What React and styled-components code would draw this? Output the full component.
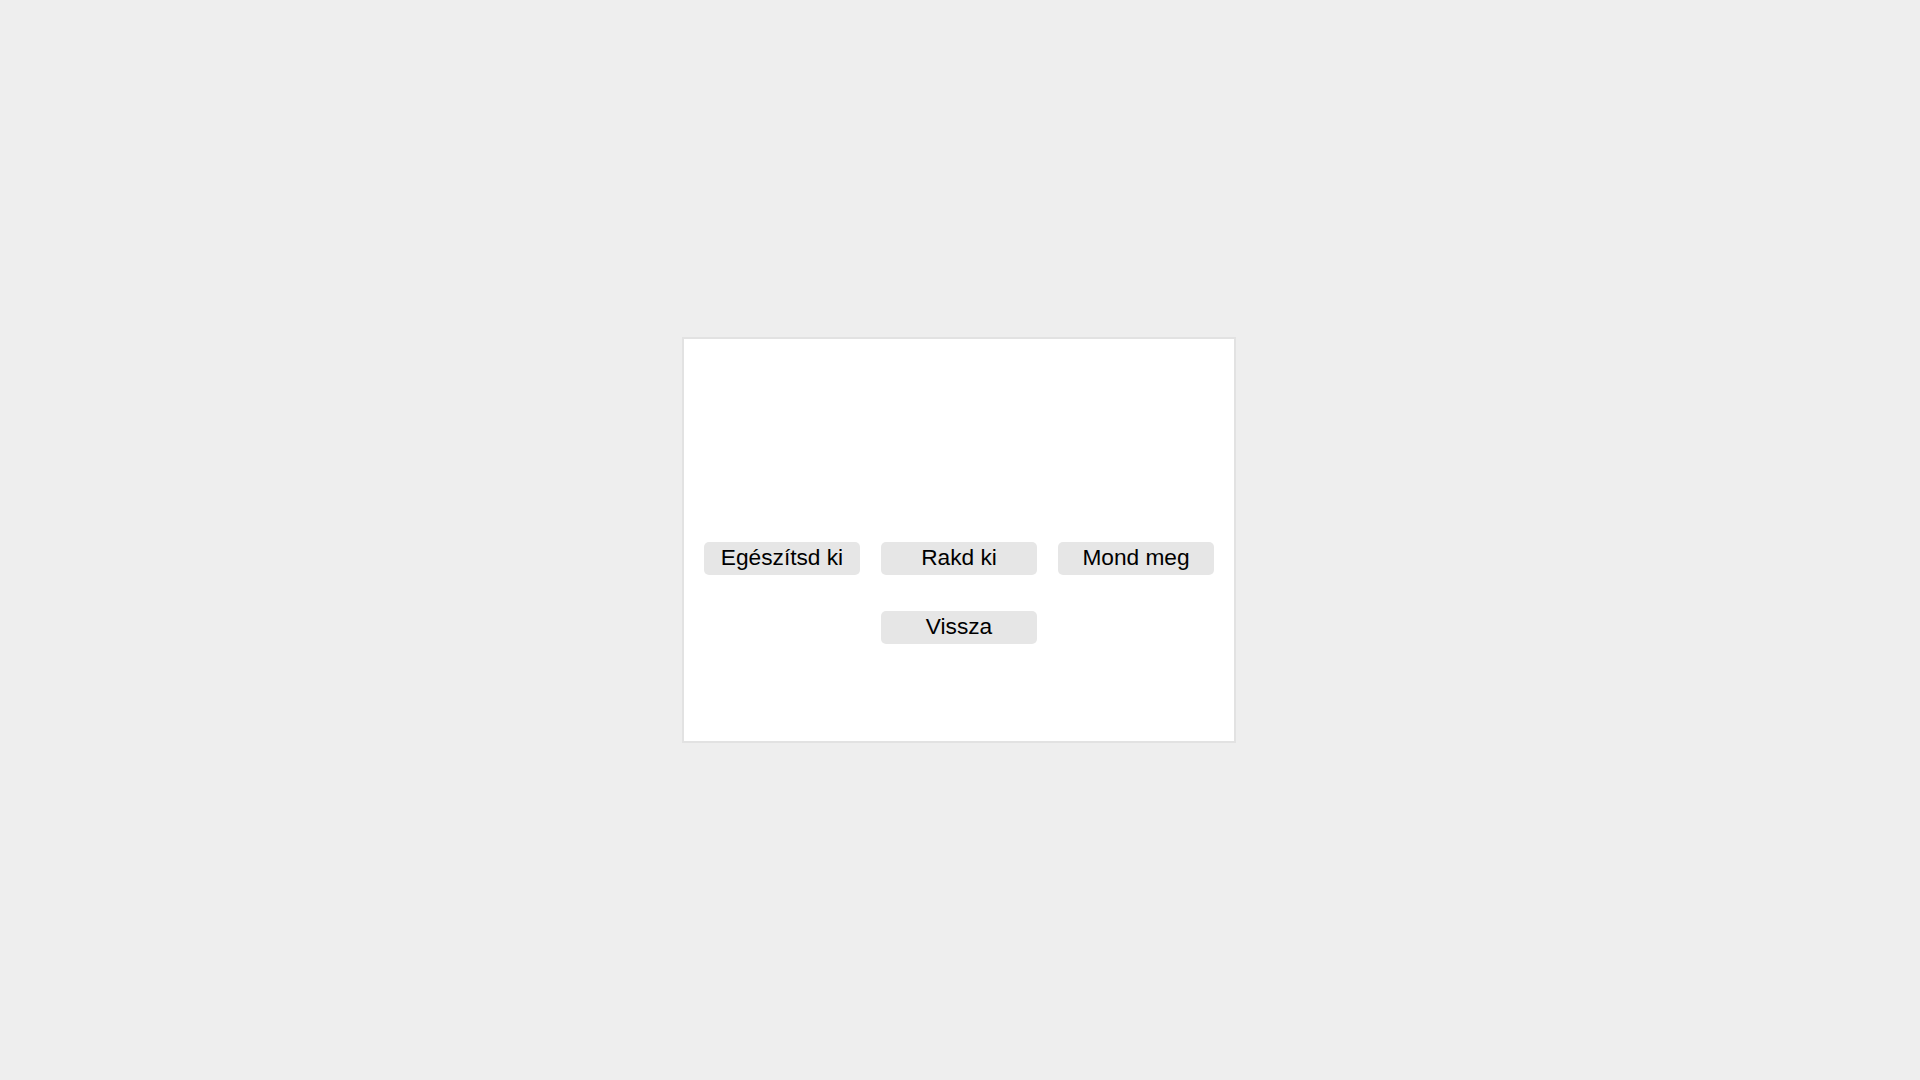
import styled, { createGlobalStyle } from 'styled-components'

const GlobalStyle = createGlobalStyle`
  html, body {
    margin: 0;
    padding: 0;
    background: #eeeeee;
    font-family: "Liberation Sans", Arial, sans-serif;
  }
`

const Page = styled.div`
  height: 100vh;
  padding: 0 2px 16px 0;
  display: flex;
  align-items: center;
  justify-content: center;
`

const Card = styled.div`
  box-sizing: border-box;
  width: 554px;
  height: 406px;
  background: #ffffff;
  border: 2px solid #e2e2e2;
  padding-top: 203px;
  display: grid;
  grid-template-columns: repeat(3, 156px);
  grid-auto-rows: 33px;
  justify-content: center;
  align-content: start;
  column-gap: 21px;
  row-gap: 36px;
`

const Button = styled.button`
  grid-column: ${(p) => p.$col || 'auto'};
  border: none;
  border-radius: 5px;
  background: #e6e6e6;
  color: #000000;
  font-family: "Liberation Sans", Arial, sans-serif;
  font-size: 22.7px;
  line-height: 1;
  padding: 0 0 3px;
  cursor: pointer;
`

const actions = ['Egészítsd ki', 'Rakd ki', 'Mond meg']

function App() {
  return (
    <>
      <GlobalStyle />
      <Page>
        <Card>
          {actions.map((label) => (
            <Button key={label}>{label}</Button>
          ))}
          <Button $col="2">Vissza</Button>
        </Card>
      </Page>
    </>
  )
}

export default App
